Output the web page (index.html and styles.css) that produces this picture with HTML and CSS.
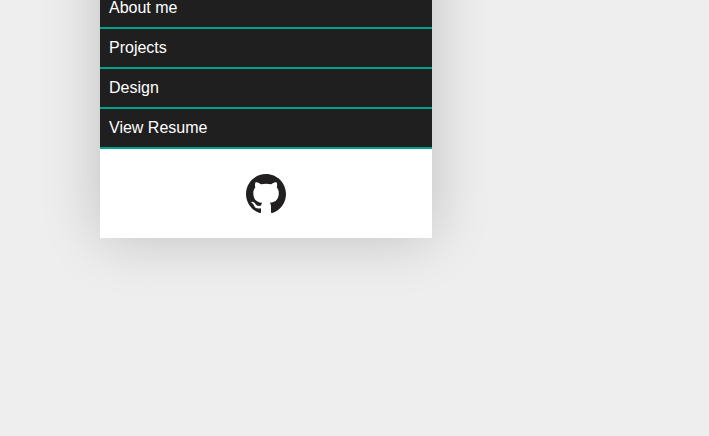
FILE: index.html
```html
<!DOCTYPE html>
<html lang="en">
<head>
<meta charset="utf-8">
<meta name="viewport" content="width=device-width, initial-scale=1">
<title>Profile menu</title>
<link rel="stylesheet" href="styles.css">
</head>
<body>
<aside class="card">
  <nav class="menu">
    <a class="menu-link" href="#about">About me</a>
    <a class="menu-link" href="#projects">Projects</a>
    <a class="menu-link" href="#design">Design</a>
    <a class="menu-link" href="#resume">View Resume</a>
  </nav>
  <footer class="social">
    <a class="social-link" href="#github" aria-label="GitHub">
      <svg class="social-icon" viewBox="0 0 16 16" aria-hidden="true"><path fill-rule="evenodd" d="M8 0C3.58 0 0 3.58 0 8c0 3.54 2.29 6.53 5.47 7.59.4.07.55-.17.55-.38 0-.19-.01-.82-.01-1.49-2.01.37-2.53-.49-2.69-.94-.09-.23-.48-.94-.82-1.13-.28-.15-.68-.52-.01-.53.63-.01 1.08.58 1.23.82.72 1.21 1.87.87 2.33.66.07-.52.28-.87.51-1.07-1.78-.2-3.64-.89-3.64-3.95 0-.87.31-1.59.82-2.15-.08-.2-.36-1.02.08-2.12 0 0 .67-.21 2.2.82.64-.18 1.32-.27 2-.27s1.36.09 2 .27c1.53-1.04 2.2-.82 2.2-.82.44 1.1.16 1.92.08 2.12.51.56.82 1.27.82 2.15 0 3.07-1.87 3.75-3.65 3.95.29.25.54.73.54 1.48 0 1.07-.01 1.93-.01 2.2 0 .21.15.46.55.38A8.01 8.01 0 0 0 16 8c0-4.42-3.58-8-8-8z"/></svg>
    </a>
  </footer>
</aside>
</body>
</html>
```
FILE: styles.css
```css
body {
  display: flow-root;
  min-height: 100vh;
  margin: 0;
  background: #eee;
  font-family: "Liberation Sans", Arial, sans-serif;
  font-size: 16px;
}

/* The card runs on above the top of the window. */
.card {
  width: calc(50% - 22px);
  max-width: 332px;
  margin: -111px 0 0 100px;
  padding-top: 100px;
  background: #fff;
  box-shadow: 0 0 55px rgba(0, 0, 0, 0.2);
}

.menu-link {
  display: block;
  padding: 10px 9px;
  border-bottom: 2px solid #00a388;
  background: #1f1f1f;
  color: #fff;
  line-height: 18px;
  text-decoration: none;
}

.social {
  display: flex;
  justify-content: center;
  padding: 25px 0 24px;
}

.social-link {
  display: block;
}

.social-icon {
  display: block;
  width: 40px;
  height: 40px;
  fill: #211f1f;
}
```
